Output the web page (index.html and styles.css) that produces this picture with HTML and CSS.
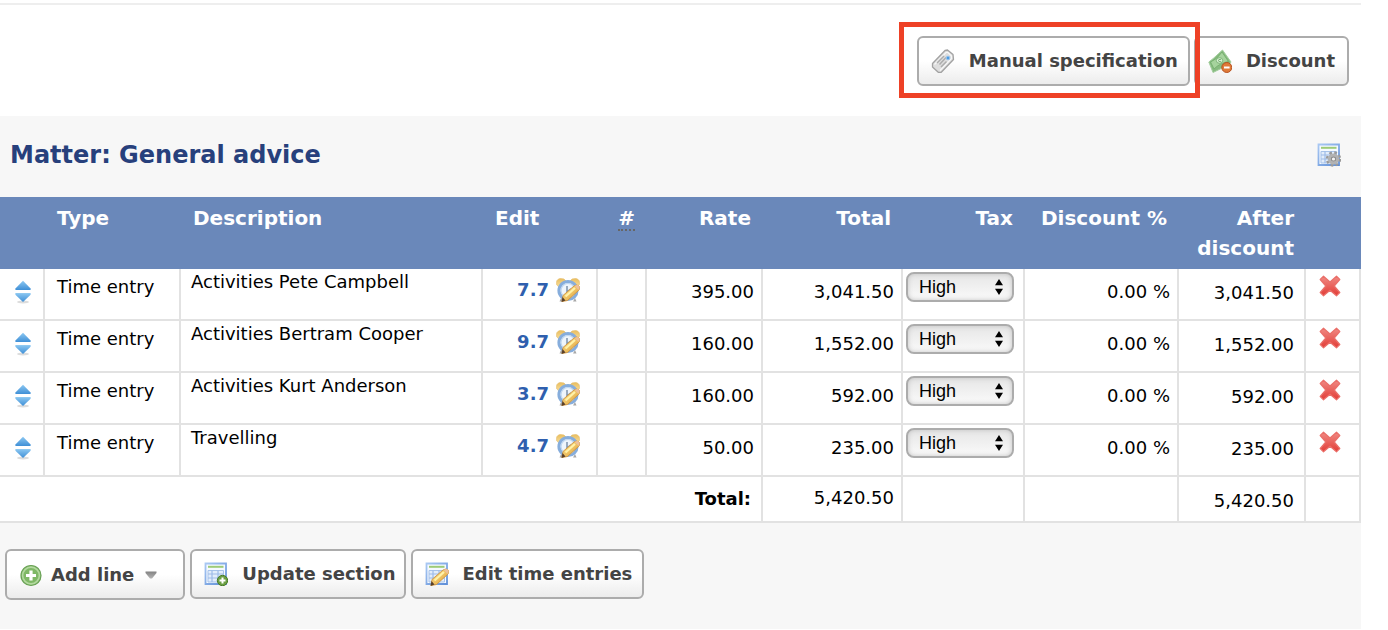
FILE: index.html
```html
<!DOCTYPE html>
<html lang="en">
<head>
<meta charset="utf-8">
<title>Matter: General advice</title>
<link rel="stylesheet" href="styles.css">
</head>
<body>
<svg class="sprite" aria-hidden="true">
  <defs>
    <linearGradient id="g-blue-up" x1="0" y1="0" x2="0" y2="1"><stop offset="0" stop-color="#8cc8f2"/><stop offset="1" stop-color="#3f8fd6"/></linearGradient>
    <linearGradient id="g-red" x1="0" y1="0" x2="0" y2="1"><stop offset="0" stop-color="#f08a84"/><stop offset="1" stop-color="#e23c36"/></linearGradient>
    <linearGradient id="g-sheet" x1="0" y1="0" x2="1" y2="1"><stop offset="0" stop-color="#a9c8f3"/><stop offset="1" stop-color="#5f8fd8"/></linearGradient>
    <linearGradient id="g-pencil" x1="0" y1="0" x2="1" y2="1"><stop offset="0" stop-color="#ffe99a"/><stop offset="1" stop-color="#dd9a2c"/></linearGradient>
    <linearGradient id="g-gold" x1="0" y1="0" x2="0" y2="1"><stop offset="0" stop-color="#e9bd5e"/><stop offset="1" stop-color="#f8df9c"/></linearGradient>
    <linearGradient id="g-grey" x1="0" y1="0" x2="0" y2="1"><stop offset="0" stop-color="#828282"/><stop offset="1" stop-color="#b4b4b4"/></linearGradient>
  </defs>
  <symbol id="i-sort" viewBox="0 0 16 24">
    <ellipse cx="8" cy="22" rx="6" ry="1.5" fill="#dcdcdc"/>
    <path d="M8 .8 15.6 8.500V10H.4V8.500Z" fill="url(#g-blue-up)"/>
    <path d="M.4 13H15.600V14.800L8 22 .4 14.800Z" fill="url(#g-blue-up)"/>
    <path d="M1 13.500H15" stroke="#8ec8f0"/>
  </symbol>
  <symbol id="i-delete" viewBox="0 0 24 24">
    <path d="M5.500 2.200 12 8 18.500 2.200 21.800 5.500 16.200 12 21.800 18.500 18.500 21.800 12 16.200 5.500 21.800 2.200 18.500 7.800 12 2.200 5.500Z" fill="url(#g-red)" stroke="#ea6f69" stroke-width="1.200" stroke-linejoin="round"/>
  </symbol>
  <symbol id="i-pencil" viewBox="0 0 24 24">
    <path d="M7 17.500 18 8Q21 6 23 8T22.500 12.500L11.500 22.500 6 23.500Z" fill="url(#g-pencil)" stroke="#cf9440" stroke-width=".9"/>
    <path d="M9.500 18.500 19 10" stroke="#fff2a8" stroke-width="2.200"/>
    <path d="M18.500 7.800Q22 6 23.200 8T22.500 12Z" fill="#eec09a"/>
    <path d="M6.500 19 9.500 22.500 5.500 24Z" fill="#59402a"/>
  </symbol>
  <symbol id="i-clock" viewBox="0 0 24 24">
    <path d="M5 20 3.500 23.500H7L8 21M19 20 20.500 23.500H17" fill="#a8a8a8"/>
    <path d="M.8 7Q-.5 1.500 4 .6 8.500.2 10 3L3 9ZM23.200 7Q24.500 1.500 20 .6 15.500.2 14 3L21 9Z" fill="url(#g-gold)" stroke="#e6c070" stroke-width=".7"/>
    <circle cx="12" cy="12.500" r="9" fill="#eef5fc" stroke="#86addc" stroke-width="3.200"/>
    <circle cx="12" cy="12.500" r="7" fill="none" stroke="#bfd7f0" stroke-width="1.200"/>
    <path d="M11 8V14L15 11" fill="none" stroke="#8398b0" stroke-width="1.600"/>
    <use href="#i-pencil" width="24" height="24"/>
  </symbol>
  <symbol id="i-sheet" viewBox="0 0 24 24">
    <path d="M1.500 1.500H22V22H1.500Z" fill="#f6faff" stroke="url(#g-sheet)" stroke-width="1.800"/>
    <path d="M4 4.800H19.500" stroke="#9dcb78" stroke-width="2"/>
    <path d="M4 8.500H19.500V20H4Z" fill="#e2edfb" stroke="#a7c3ea"/>
    <path d="M4 12H19.500M4 16H19.500M8 8.500V20M14 8.500V20" stroke="#9dbbe8" stroke-width="1.200"/>
  </symbol>
  <symbol id="i-sheet-edit" viewBox="0 0 24 24">
    <use href="#i-sheet" width="24" height="24"/><use href="#i-pencil" width="24" height="24"/>
  </symbol>
  <symbol id="i-sheet-add" viewBox="0 0 24 24">
    <use href="#i-sheet" width="24" height="24"/>
    <circle cx="18.500" cy="18.500" r="5.200" fill="#6b9f43" stroke="#477a28"/>
    <path d="M18.500 15.500V21.500M15.500 18.500H21.500" stroke="#fff" stroke-width="2"/>
  </symbol>
  <symbol id="i-sheet-gear" viewBox="0 0 24 24">
    <use href="#i-sheet" width="24" height="24"/>
    <circle cx="16.500" cy="16" r="6.400" fill="none" stroke="#9a9a9a" stroke-width="2.600" stroke-dasharray="2.600 2.426"/>
    <circle cx="16.500" cy="16" r="4.200" fill="#e8e8e8" stroke="#b2b2b2" stroke-width="2.800"/>
    <circle cx="16.500" cy="16" r="2.200" fill="#f4f4f4" stroke="#8c8c8c" stroke-width="1.200"/>
  </symbol>
  <symbol id="i-add" viewBox="0 0 24 24">
    <circle cx="12" cy="12.500" r="10" fill="#7fb866" stroke="#68a054" stroke-width="1.200"/>
    <circle cx="12" cy="12.500" r="8.400" fill="none" stroke="#b4d9a0" stroke-width="1.600"/>
    <path d="M12 7.500V17.500M7 12.500H17" stroke="#fff" stroke-width="3.200"/>
  </symbol>
  <symbol id="i-tag" viewBox="0 0 24 24">
    <path d="M1.500 14.500 14 1.500 16.500 1 22 5.500 22.500 10.500 10 23.500 7.500 23.500 1.500 18Z" fill="#dedede" stroke="#a2a2a2" stroke-width="1.300" stroke-linejoin="round"/>
    <path d="M3.500 15.500 15 3.500H17L20.500 7V9.500L9 21.500" fill="none" stroke="#f8f8f8" stroke-width="1.200"/>
    <path d="M6 14 13 7M8.500 15.500 15 8.500M10 18 15.500 12.500" stroke="#acacac" stroke-width="1.500"/>
    <circle cx="17" cy="9" r="1.900" fill="#4b9be3" stroke="#a9cdee" stroke-width=".8"/>
  </symbol>
  <symbol id="i-money" viewBox="0 0 24 24">
    <path d="M.8 13Q6 9 8 7T14.500 1L23 13 21 16Q14 19 5 23.500Z" fill="#87bb7f" stroke="#a5cfa0"/>
    <path d="M2.500 13Q9 10.500 14 3L20.500 12.500Q12 14 6 20Z" fill="#a6d39d" stroke="#78b071"/>
    <ellipse cx="11.500" cy="11.500" rx="3.200" ry="2.800" fill="#d9efd4" stroke="#7eb578"/>
    <path d="M12.800 10.500Q10.500 9.800 10.500 11.500T12.800 12.500" fill="none" stroke="#6ea969"/>
    <circle cx="18.800" cy="18.500" r="5" fill="#df7a38" stroke="#b6501e"/>
    <path d="M16 18.500H21.600" stroke="#fff" stroke-width="2"/>
  </symbol>
  <symbol id="i-caret" viewBox="0 0 12 8"><path d="M.5 .5H11.500V2L7 7.500H5L.5 2Z" fill="url(#g-grey)"/></symbol>
  <symbol id="i-updown" viewBox="0 0 8 16"><path d="M4 0 8 6.200H0ZM4 16 8 9.800H0Z" fill="#000"/></symbol>
</svg>

<main class="page">
  <div class="toolbar">
    <div class="highlight">
      <button class="btn" type="button"><svg class="icon"><use href="#i-tag"/></svg>Manual specification</button>
    </div>
    <button class="btn btn-discount" type="button"><svg class="icon"><use href="#i-money"/></svg>Discount</button>
  </div>

  <section class="section">
    <header class="section-head">
      <h2 class="section-title">Matter: General advice</h2>
      <button class="icon-btn" type="button" aria-label="Section settings"><svg class="icon"><use href="#i-sheet-gear"/></svg></button>
    </header>

    <table class="lines">
      <colgroup>
        <col class="c-sort"><col class="c-type"><col class="c-desc"><col class="c-edit"><col class="c-num"><col class="c-rate"><col class="c-total"><col class="c-tax"><col class="c-disc"><col class="c-after"><col class="c-del">
      </colgroup>
      <thead>
        <tr>
          <th></th><th>Type</th><th>Description</th><th>Edit</th>
          <th class="num"><span class="abbr">#</span></th>
          <th class="num">Rate</th><th class="num">Total</th><th class="num">Tax</th><th class="num nowrap">Discount %</th><th class="num">After discount</th><th></th>
        </tr>
      </thead>
      <tbody>
        <tr>
          <td class="sort"><button class="icon-btn" type="button" aria-label="Move line"><svg class="icon-sort"><use href="#i-sort"/></svg></button></td>
          <td class="type">Time entry</td>
          <td class="desc">Activities Pete Campbell</td>
          <td class="edit"><a class="hours" href="#">7.7<svg class="icon"><use href="#i-clock"/></svg></a></td>
          <td></td>
          <td class="num amount">395.00</td>
          <td class="num amount">3,041.50</td>
          <td class="tax"><div class="select"><select aria-label="Tax"><option>High</option><option>Low</option></select><svg class="updown"><use href="#i-updown"/></svg></div></td>
          <td class="num amount">0.00 %</td>
          <td class="num after">3,041.50</td>
          <td class="del"><button class="icon-btn" type="button" aria-label="Delete line"><svg class="icon"><use href="#i-delete"/></svg></button></td>
        </tr>
        <tr>
          <td class="sort"><button class="icon-btn" type="button" aria-label="Move line"><svg class="icon-sort"><use href="#i-sort"/></svg></button></td>
          <td class="type">Time entry</td>
          <td class="desc">Activities Bertram Cooper</td>
          <td class="edit"><a class="hours" href="#">9.7<svg class="icon"><use href="#i-clock"/></svg></a></td>
          <td></td>
          <td class="num amount">160.00</td>
          <td class="num amount">1,552.00</td>
          <td class="tax"><div class="select"><select aria-label="Tax"><option>High</option><option>Low</option></select><svg class="updown"><use href="#i-updown"/></svg></div></td>
          <td class="num amount">0.00 %</td>
          <td class="num after">1,552.00</td>
          <td class="del"><button class="icon-btn" type="button" aria-label="Delete line"><svg class="icon"><use href="#i-delete"/></svg></button></td>
        </tr>
        <tr>
          <td class="sort"><button class="icon-btn" type="button" aria-label="Move line"><svg class="icon-sort"><use href="#i-sort"/></svg></button></td>
          <td class="type">Time entry</td>
          <td class="desc">Activities Kurt Anderson</td>
          <td class="edit"><a class="hours" href="#">3.7<svg class="icon"><use href="#i-clock"/></svg></a></td>
          <td></td>
          <td class="num amount">160.00</td>
          <td class="num amount">592.00</td>
          <td class="tax"><div class="select"><select aria-label="Tax"><option>High</option><option>Low</option></select><svg class="updown"><use href="#i-updown"/></svg></div></td>
          <td class="num amount">0.00 %</td>
          <td class="num after">592.00</td>
          <td class="del"><button class="icon-btn" type="button" aria-label="Delete line"><svg class="icon"><use href="#i-delete"/></svg></button></td>
        </tr>
        <tr>
          <td class="sort"><button class="icon-btn" type="button" aria-label="Move line"><svg class="icon-sort"><use href="#i-sort"/></svg></button></td>
          <td class="type">Time entry</td>
          <td class="desc">Travelling</td>
          <td class="edit"><a class="hours" href="#">4.7<svg class="icon"><use href="#i-clock"/></svg></a></td>
          <td></td>
          <td class="num amount">50.00</td>
          <td class="num amount">235.00</td>
          <td class="tax"><div class="select"><select aria-label="Tax"><option>High</option><option>Low</option></select><svg class="updown"><use href="#i-updown"/></svg></div></td>
          <td class="num amount">0.00 %</td>
          <td class="num after">235.00</td>
          <td class="del"><button class="icon-btn" type="button" aria-label="Delete line"><svg class="icon"><use href="#i-delete"/></svg></button></td>
        </tr>
      </tbody>
      <tfoot>
        <tr>
          <th class="num" colspan="6" scope="row">Total:</th>
          <td class="num amount">5,420.50</td>
          <td></td><td></td>
          <td class="num after">5,420.50</td>
          <td></td>
        </tr>
      </tfoot>
    </table>

    <footer class="actions">
      <button class="btn btn-menu" type="button"><svg class="icon"><use href="#i-add"/></svg>Add line<svg class="caret"><use href="#i-caret"/></svg></button>
      <button class="btn btn-update" type="button"><svg class="icon"><use href="#i-sheet-add"/></svg>Update section</button>
      <button class="btn" type="button"><svg class="icon"><use href="#i-sheet-edit"/></svg>Edit time entries</button>
    </footer>
  </section>
</main>
</body>
</html>
```
FILE: styles.css
```css
* { box-sizing: border-box; }

body {
  margin: 0;
  background: #fff;
  color: #000;
  font: 18px/24px Verdana, "DejaVu Sans", sans-serif;
}

.sprite { position: absolute; width: 0; height: 0; }

.page {
  margin: 3px 27px 0 0;
  border-top: 2px solid #eee;
}

.icon { width: 24px; height: 24px; flex: none; display: block; }
.icon-sort { width: 16px; height: 24px; display: block; }

.icon-btn {
  display: block;
  padding: 0;
  border: 0;
  background: none;
  cursor: pointer;
}

/* Buttons */
.btn {
  display: flex;
  align-items: center;
  gap: 14px;
  height: 50px;
  padding: 0 10px 0 12px;
  border: 2px solid #acacac;
  border-radius: 6px;
  background: linear-gradient(#fff 50%, #ececec);
  color: #444;
  font: bold 18px/24px Verdana, "DejaVu Sans", sans-serif;
  white-space: nowrap;
  cursor: pointer;
}

.btn-discount { padding-right: 12px; }

.btn-menu {
  gap: 8px;
  height: 51px;
  padding-right: 26px;
}

.btn-update { padding-right: 8px; }

.caret { width: 12px; height: 8px; margin-left: 3px; }

.toolbar {
  display: flex;
  justify-content: flex-end;
  gap: 4px;
  padding: 31px 12px 30px;
}

.highlight { position: relative; }

.highlight::after {
  content: "";
  position: absolute;
  inset: -14px -10px -12px -18px;
  border: 5px solid #ee4126;
  pointer-events: none;
}

/* Section */
.section { background: #f7f7f7; }

.section-head {
  display: flex;
  align-items: center;
  justify-content: space-between;
  padding: 24px 20px 27px 10px;
}

.section-title {
  margin: 0;
  color: #27407c;
  font-size: 24px;
  line-height: 30px;
}

/* Lines table */
.lines {
  width: 100%;
  table-layout: fixed;
  border-collapse: separate;
  border-spacing: 0;
  background: #fff;
}

.c-sort { width: 45px; }
.c-type { width: 136px; }
.c-edit { width: 115px; }
.c-num { width: 49px; }
.c-rate { width: 116px; }
.c-total { width: 140px; }
.c-tax { width: 122px; }
.c-disc { width: 154px; }
.c-after { width: 127px; }
.c-del { width: 55px; }

.lines thead th {
  padding: 6px 12px;
  background: #6a88ba;
  color: #fff;
  font-size: 20px;
  line-height: 30px;
  text-align: left;
  vertical-align: top;
}

.lines td,
.lines tfoot th {
  height: 52px;
  padding: 0 6px 0 10px;
  border: solid #e2e2e2;
  border-width: 0 2px 2px 0;
  vertical-align: top;
}

.lines thead .num,
.lines .num { text-align: right; }
.lines .nowrap { white-space: nowrap; }

.abbr {
  display: inline-block;
  border-bottom: 2px dotted #666;
  line-height: 22px;
}

.lines .sort { padding: 11px 0 0 15px; }
.lines .type { padding-top: 6px; padding-left: 12px; }
.lines .desc { padding-top: 1px; }
.lines .edit { padding: 9px 16px 0 0; }
.lines .amount { padding-top: 11px; padding-right: 7px; }
.lines .after { padding-top: 12px; padding-right: 10px; }
.lines .tax { padding: 3px 0 0 3px; }
.lines .del { padding: 5px 0 0 12px; }

.lines tfoot td,
.lines tfoot th { height: 46px; }
.lines tfoot th { padding: 10px 10px 0; }
.lines tfoot .amount { padding-top: 9px; }

.hours {
  display: flex;
  justify-content: flex-end;
  gap: 7px;
  color: #2f5fae;
  font-weight: bold;
  text-decoration: none;
}

.select {
  display: grid;
  align-items: center;
  width: 108px;
}

.select select,
.select .updown { grid-area: 1 / 1; }

.select select {
  appearance: none;
  height: 30px;
  padding: 0 24px 0 11px;
  border: 2px solid #acacac;
  border-radius: 8px;
  background: linear-gradient(#e6e6e6, #fafafa);
  box-shadow: inset 0 0 5px #c4c4c4;
  color: #000;
  font: 18px "Liberation Sans", Arial, sans-serif;
}

.updown {
  justify-self: end;
  width: 8px;
  height: 16px;
  margin-right: 11px;
  pointer-events: none;
}

.actions {
  display: flex;
  gap: 5px;
  padding: 26px 5px 29px;
}
```
